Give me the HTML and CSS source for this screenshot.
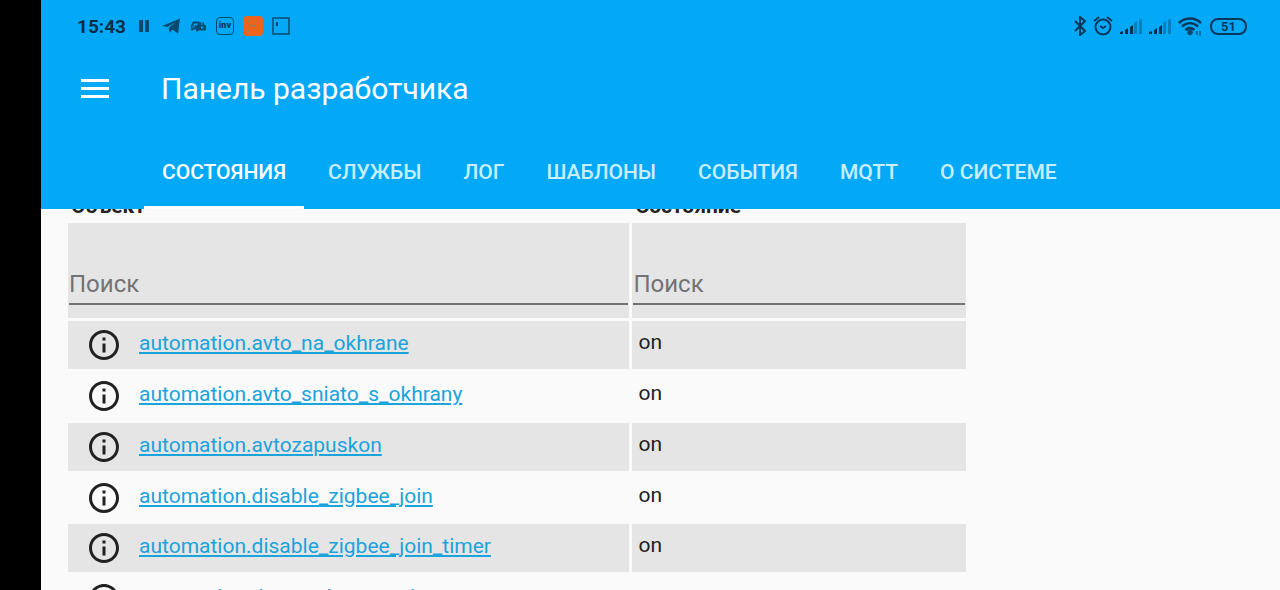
FILE: index.html
```html
<!DOCTYPE html>
<html lang="ru">
<head>
<meta charset="utf-8">
<meta name="viewport" content="width=device-width, initial-scale=1">
<title>Панель разработчика</title>
<link rel="stylesheet" href="styles.css">
</head>
<body>
<svg class="defs" aria-hidden="true">
  <symbol id="info" viewBox="0 0 24 24"><path d="M11 17h2v-6h-2v6zm0-8h2V7h-2v2zm1-7C6.48 2 2 6.48 2 12s4.48 10 10 10 10-4.480 10-10S17.520 2 12 2zm0 18c-4.410 0-8-3.590-8-8s3.590-8 8-8 8 3.590 8 8-3.590 8-8 8z"/></symbol>
  <symbol id="signal" viewBox="0 0 22 15"><path d="M0 15v-2l3-1v3zM5 15v-4l3-2v6zM10 15V8l3-2v9z"/><path opacity=".35" d="M14 15V4l3-2v13zM19 15V1l3-1v15z"/></symbol>
</svg>
<div class="app">
  <header class="header">
    <div class="status">
      <div class="status-group">
        <span class="clock">15:43</span>
        <svg width="18" height="12" viewBox="-4 0 18 12"><path d="M0 0h4v12H0zM6 0h4v12H6z"/></svg>
        <svg width="18" height="16" viewBox="0 0 19 16"><path d="M0 8 19 0l-2 16-6-4-3 3-1-5 7-6-8 5z"/></svg>
        <svg width="18" height="11" viewBox="-1 0 18 10"><path fill-rule="evenodd" d="M1 4 3 0h6l1 1h4v2l2 1v5H8v1H6V8H3v1H1zM4 2 3 4h4l1-2zM2 5v1h3V5zM11 2v1h2V2zM11 5v2h2V5z"/></svg>
        <span class="inv">inv</span>
        <svg width="20" height="20" viewBox="0 0 20 20"><rect width="20" height="20" rx="4" fill="#ec651c"/><path d="M4 5h2M7 9h2M10 10h3M5 15h1" fill="none" stroke="#a37a59" stroke-width="2"/></svg>
        <svg width="18" height="18" viewBox="0 0 18 18"><path d="M1 1h16v16H1z" fill="none" stroke="#064a70" stroke-width="1.500"/><path d="M4 5h2v4H4z"/></svg>
      </div>
      <div class="status-group status-right">
        <svg class="line" width="12" height="20" viewBox="0 0 12 20"><path d="m1 5 10 10-5 4V1l5 4L1 15"/></svg>
        <svg class="line" width="20" height="20" viewBox="0 0 20 20"><circle cx="10" cy="11" r="7.500"/><path d="m7 10 3 2 3-2M1 5l5-4M14 1l5 4"/></svg>
        <svg class="bars" width="22" height="15"><use href="#signal"/></svg>
        <svg class="bars" width="22" height="15"><use href="#signal"/></svg>
        <svg width="25" height="19" viewBox="0 0 25 19"><path d="M1 6c6-6 16-6 22 0M4 9.500c5-4.500 11-4.500 16 0M7.500 13c3-2.500 6-2.500 9 0" fill="none" stroke="#07385a" stroke-width="2.500"/><circle cx="12" cy="15.500" r="2.800"/><path d="M19 18v-4M22 19v-5" stroke="#07385a" fill="none"/></svg>
        <span class="battery">51</span>
      </div>
    </div>
    <div class="toolbar">
      <button class="menu" type="button" aria-label="Меню"><svg width="28" height="20" viewBox="0 0 28 20"><path d="M0 1h28v3H0zM0 9h28v3H0zM0 17h28v3H0z"/></svg></button>
      <h1 class="title">Панель разработчика</h1>
    </div>
    <nav class="tabs">
      <a class="tab active" href="#states">СОСТОЯНИЯ</a>
      <a class="tab" href="#services">СЛУЖБЫ</a>
      <a class="tab" href="#log">ЛОГ</a>
      <a class="tab" href="#templates">ШАБЛОНЫ</a>
      <a class="tab" href="#events">СОБЫТИЯ</a>
      <a class="tab" href="#mqtt">MQTT</a>
      <a class="tab" href="#about">О СИСТЕМЕ</a>
    </nav>
  </header>
  <main class="content">
    <table class="entities">
      <thead>
        <tr class="headings"><th class="entity-col">Объект</th><th>Состояние</th></tr>
        <tr class="filters">
          <td><input type="text" placeholder="Поиск" aria-label="Поиск объекта"></td>
          <td><input type="text" placeholder="Поиск" aria-label="Поиск состояния"></td>
        </tr>
      </thead>
      <tbody>
        <tr><td><div class="entity"><button class="info" type="button" aria-label="Подробнее"><svg><use href="#info"/></svg></button><a href="#e1">automation.avto_na_okhrane</a></div></td><td class="state">on</td></tr>
        <tr><td><div class="entity"><button class="info" type="button" aria-label="Подробнее"><svg><use href="#info"/></svg></button><a href="#e2">automation.avto_sniato_s_okhrany</a></div></td><td class="state">on</td></tr>
        <tr><td><div class="entity"><button class="info" type="button" aria-label="Подробнее"><svg><use href="#info"/></svg></button><a href="#e3">automation.avtozapuskon</a></div></td><td class="state">on</td></tr>
        <tr><td><div class="entity"><button class="info" type="button" aria-label="Подробнее"><svg><use href="#info"/></svg></button><a href="#e4">automation.disable_zigbee_join</a></div></td><td class="state">on</td></tr>
        <tr><td><div class="entity"><button class="info" type="button" aria-label="Подробнее"><svg><use href="#info"/></svg></button><a href="#e5">automation.disable_zigbee_join_timer</a></div></td><td class="state">on</td></tr>
        <tr><td><div class="entity"><button class="info" type="button" aria-label="Подробнее"><svg><use href="#info"/></svg></button><a href="#e6">automation.doma_okna_zamka</a></div></td><td class="state">on</td></tr>
      </tbody>
    </table>
  </main>
</div>
</body>
</html>
```
FILE: styles.css
```css
* { box-sizing: border-box; }

body {
  margin: 0;
  padding-left: 41px;
  background: #000;
  color: #212121;
  font-family: Roboto, sans-serif;
  font-size: 21px;
}

button {
  padding: 0;
  border: 0;
  background: none;
  color: inherit;
}

svg { display: block; flex: none; }

.defs { display: none; }

.app {
  display: flex;
  flex-direction: column;
  height: 100vh;
  overflow: hidden;
  background: #fafafa;
}

.header {
  flex: none;
  background: #03a9f7;
  color: #fff;
}

.status {
  display: flex;
  justify-content: space-between;
  height: 52px;
  padding: 0 33px 0 36px;
  color: #07385a;
}

.status svg { fill: #064a70; }

.status .line {
  fill: none;
  stroke: #07385a;
  stroke-width: 2;
}

.status .bars { fill: #07304d; }

.status-group {
  display: flex;
  align-items: center;
  gap: 9px;
}

.status-right { gap: 7px; }

.clock {
  color: #062c47;
  font-size: 19px;
  font-weight: 700;
}

.inv {
  width: 18px;
  height: 18px;
  border: 1px solid #064a70;
  border-radius: 4px;
  font-size: 9px;
  font-weight: 900;
  line-height: 15px;
  text-align: center;
}

.battery {
  width: 37px;
  height: 17px;
  border: 2px solid #07385a;
  border-radius: 8px;
  font-size: 13px;
  font-weight: 700;
  line-height: 13px;
  text-align: center;
}

.toolbar {
  display: flex;
  align-items: center;
  gap: 52px;
  height: 72px;
  padding-left: 40px;
}

.menu svg { fill: #fff; }

.title {
  margin: 0;
  font-size: 30px;
  font-weight: 400;
}

.tabs {
  display: flex;
  gap: 6px;
  padding: 12px 0 0 103px;
}

.tab {
  padding: 2px 18px 0;
  border-bottom: 3px solid transparent;
  color: #c9eefd;
  font-weight: 500;
  line-height: 68px;
  text-decoration: none;
  white-space: nowrap;
}

.tab.active {
  border-color: #fff;
  color: #fff;
}

.content {
  flex: 1;
  min-height: 0;
  overflow: hidden;
}

.entities {
  width: 73%;
  margin: -19px 0 0 24px;
  border-spacing: 3px;
  table-layout: fixed;
}

.entities th {
  height: 27px;
  padding: 0 3px;
  line-height: 27px;
  text-align: left;
}

.entity-col { width: 62.7%; }

.entities td { padding: 0; }

.filters td {
  height: 95px;
  padding: 44px 1px 13px;
  background: #e5e5e5;
}

.filters input {
  display: block;
  width: 100%;
  height: 38px;
  padding: 0 0 2px;
  border: 0;
  border-bottom: 2px solid #737373;
  background: none;
  color: #212121;
  font: 24px Roboto, sans-serif;
}

.filters input::placeholder { color: #737373; opacity: 1; }

tbody td { height: 48px; }

tbody tr:nth-child(4n) td { height: 47px; }

tbody tr:nth-child(odd) td { background: #e5e5e5; }

.entity {
  display: flex;
  align-items: center;
  gap: 17px;
  padding-left: 18px;
}

.info svg {
  width: 36px;
  height: 36px;
  fill: #212121;
}

.entity a {
  padding-bottom: 4px;
  color: #1ba3dc;
}

.entities .state { padding: 0 6px 6px; }
```
